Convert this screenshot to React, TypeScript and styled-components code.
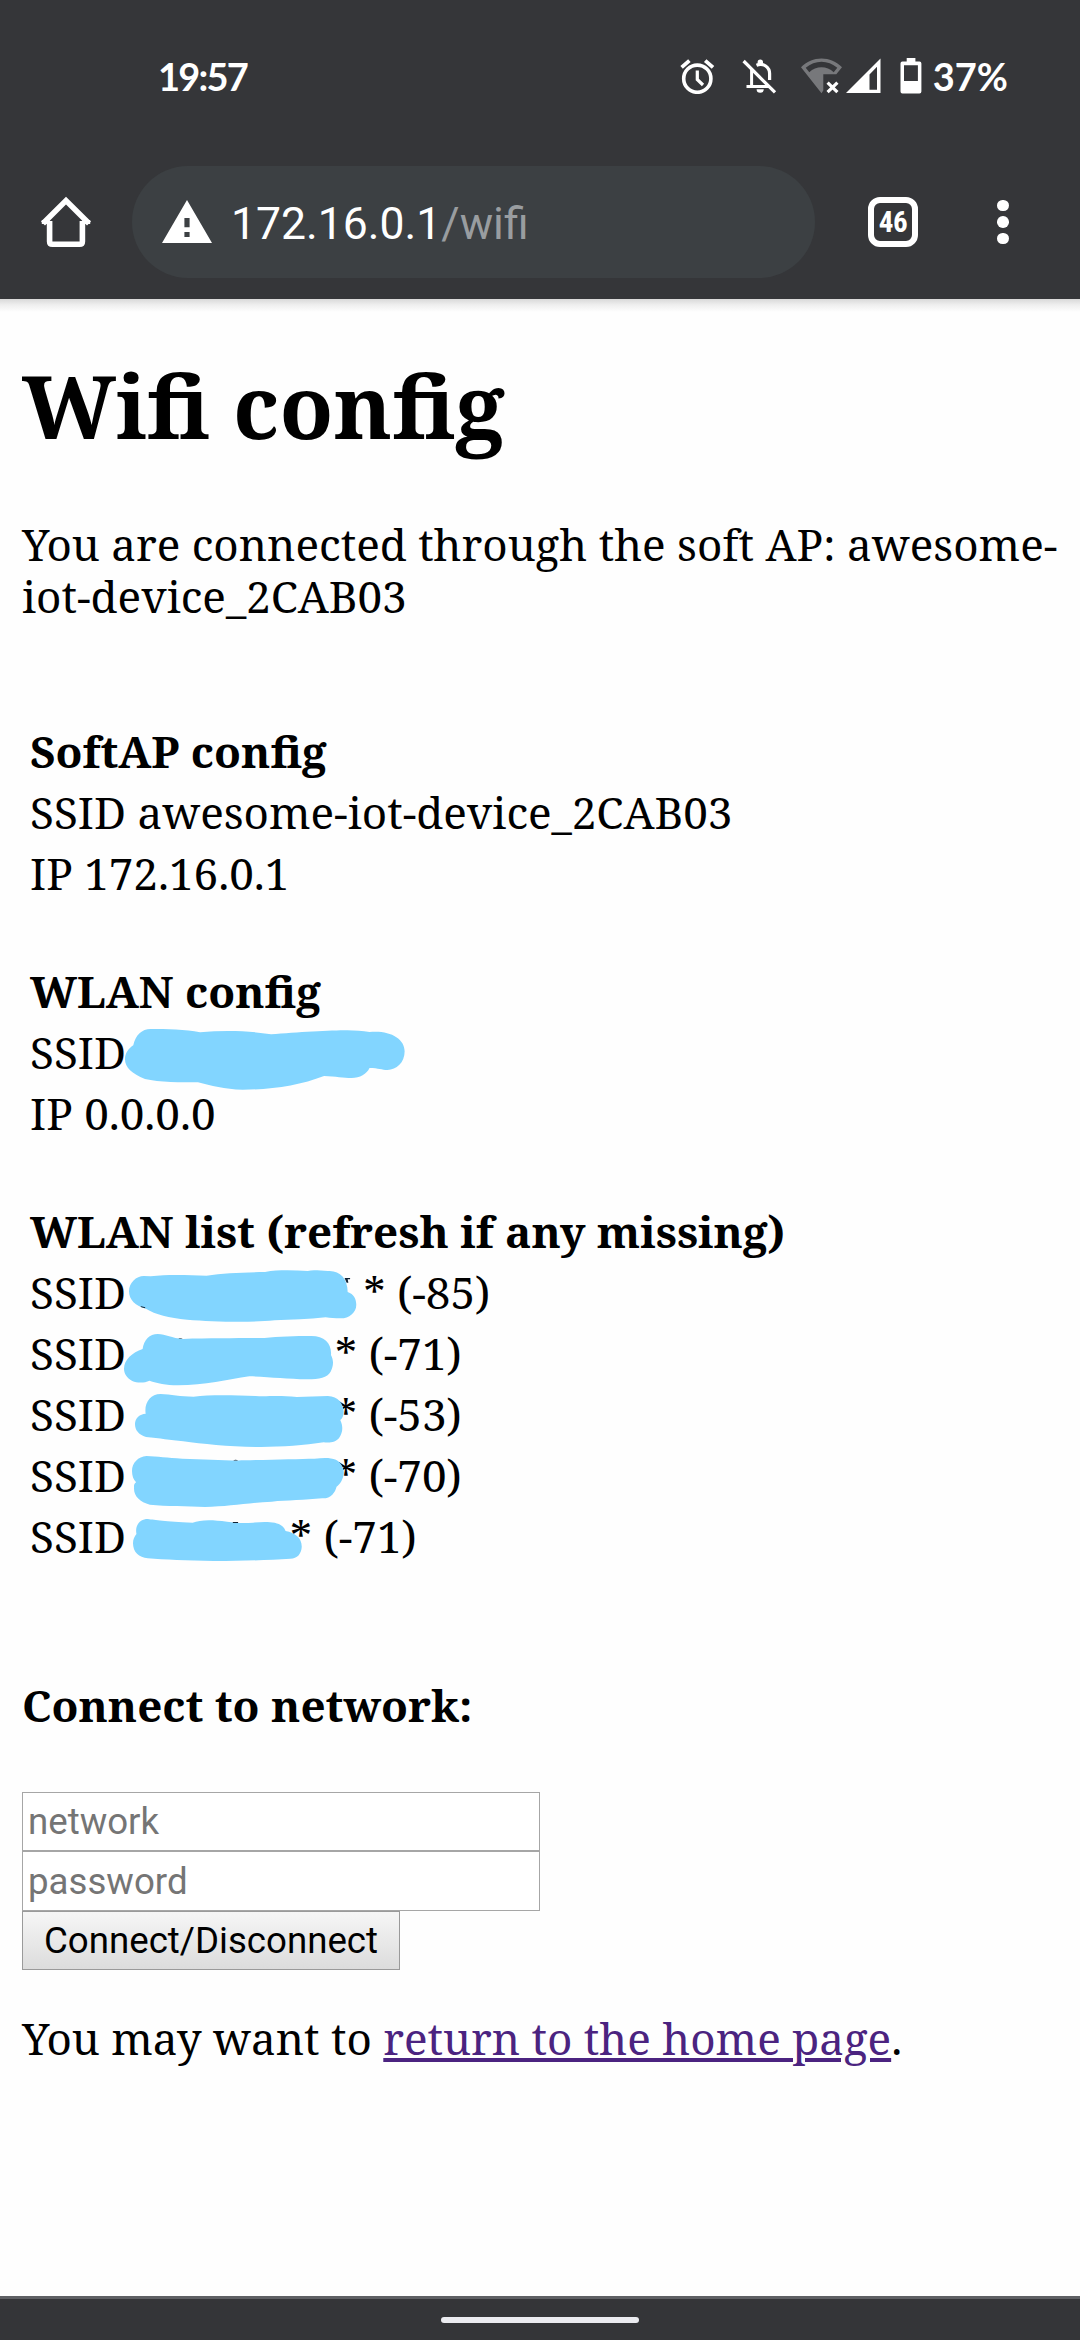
import React from "react";
import styled, { createGlobalStyle } from "styled-components";

const GlobalStyle = createGlobalStyle`
  html, body { margin: 0; background: #fefefe; }
  * { box-sizing: border-box; }
`;

const Screen = styled.div`
  display: flex;
  flex-direction: column;
  width: 1080px;
  height: 2340px;
  overflow: hidden;
  background: #fefefe;
  font-family: "Noto Serif", "DejaVu Serif", serif;
  color: #000;
`;

const BrowserTop = styled.header`
  flex: none;
  height: 299px;
  background: #353639;
  color: #fff;
`;

const StatusBar = styled.div`
  display: flex;
  justify-content: space-between;
  align-items: center;
  height: 151px;
  padding: 0 72px 0 158px;
`;

const StatusText = styled.span<{ $tracking: number }>`
  font: 700 38px/48px Lato, "Open Sans", sans-serif;
  letter-spacing: ${(p) => p.$tracking}px;
`;

const StatusGroup = styled.div`
  display: flex;
  align-items: center;
`;

const StatusIcon = styled.svg<{ $gap: number }>`
  display: block;
  flex: none;
  margin-right: ${(p) => p.$gap}px;
`;

const Toolbar = styled.div`
  display: flex;
  align-items: center;
  height: 142px;
  padding: 0 71px 0 40px;
`;

const ToolIcon = styled.svg`
  display: block;
  flex: none;
`;

const AddressBar = styled.div`
  display: flex;
  align-items: center;
  width: 683px;
  height: 112px;
  margin-left: 40px;
  padding-left: 29px;
  border-radius: 56px;
  background: #3c4043;
`;

const Url = styled.span`
  margin-left: 18px;
  padding-top: 3px;
  font: 400 44.5px/52px Roboto, sans-serif;
  color: #fff;
`;

const UrlPath = styled.span`
  color: #999da0;
`;

const TabCount = styled.div`
  display: flex;
  align-items: center;
  justify-content: center;
  width: 50px;
  height: 50px;
  margin-left: 53px;
  border: 6px solid #fff;
  border-radius: 12px;
  font: 700 29px/30px "Roboto Condensed", Roboto, sans-serif;
  letter-spacing: -0.5px;
`;

const MenuDots = styled.div`
  display: flex;
  flex-direction: column;
  gap: 5px;
  margin-left: auto;

  i {
    width: 11.6px;
    height: 11.6px;
    border-radius: 50%;
    background: #fff;
  }
`;

const Page = styled.main`
  flex: 1;
  padding: 46px 22px 0;
  background: linear-gradient(#d9d9d9, #efefef 6px, #fefefe 13px);
`;

const Title = styled.h1`
  margin: 0;
  font-size: 88px;
  line-height: 120px;
  font-weight: 700;
`;

const Paragraph = styled.p<{ $top: number }>`
  margin: ${(p) => p.$top}px 0 0;
  font-size: 44px;
  line-height: 52px;
`;

const Subtitle = styled(Paragraph)`
  font-weight: 700;
`;

const Sections = styled.div`
  display: flex;
  flex-direction: column;
  gap: 57px;
  margin-top: 99px;
  padding-left: 8px;
`;

const Section = styled.section`
  font-size: 44px;
  line-height: 61px;
`;

const SectionTitle = styled.div`
  font-weight: 700;
`;

const Row = styled.div`
  display: flex;
  height: 61px;
  white-space: pre;
`;

const HiddenName = styled.span<{ $width: number }>`
  position: relative;
  flex: none;
  width: ${(p) => p.$width}px;
`;

const Scribble = styled.svg<{ $x: number; $y: number }>`
  position: absolute;
  left: ${(p) => p.$x}px;
  top: ${(p) => p.$y}px;
  overflow: visible;
  z-index: 1;
`;

const Form = styled.form`
  display: flex;
  flex-direction: column;
  align-items: flex-start;
  margin-top: 61px;
`;

const Field = styled.input<{ $height: number }>`
  width: 518px;
  height: ${(p) => p.$height}px;
  margin: 0;
  padding: 0 5px;
  border: 1px solid #a6a6a6;
  border-radius: 0;
  background: #fff;
  font: 400 36.67px/43px Roboto, sans-serif;

  &::placeholder {
    color: #757575;
    opacity: 1;
  }
`;

const SubmitButton = styled.button`
  width: 378px;
  height: 59px;
  margin: 0;
  padding: 0;
  border: 1px solid #9a9a9a;
  border-radius: 0;
  background: linear-gradient(#f6f6f6, #dcdcdc);
  font: 400 36.67px/43px Roboto, sans-serif;
  color: #000;
`;

const HomeLink = styled.a`
  color: #4b2380;
  text-decoration: underline;
  text-decoration-thickness: 4px;
  text-underline-offset: 3px;
`;

const NavigationBar = styled.footer`
  display: flex;
  flex: none;
  justify-content: center;
  height: 44px;
  padding-top: 18px;
  border-top: 3px solid #5f6064;
  background: #343538;
`;

const Handle = styled.div`
  width: 198px;
  height: 6px;
  border-radius: 3px;
  background: #ebebf0;
`;

type Blob = { x: number; y: number; w: number; h: number; path: string; ink?: string };

const UNIT_X = 540 / 1568;
const UNIT_Y = 1 / 3;

const blobs: Record<string, Blob> = {
  saved: {
    x: 362, y: 987, w: 812, h: 182,
    path: "M386 1036C392 1005 412 987 436 987C482 987 538 988 580 997C650 990 722 992 786 1003C860 997 960 991 1008 991C1030 991 1052 994 1072 996C1130 990 1174 1015 1174 1054C1174 1088 1150 1110 1124 1110C1108 1110 1098 1104 1072 1104C1064 1122 1044 1134 1020 1134C996 1134 974 1129 940 1128C870 1156 788 1169 704 1169C650 1169 612 1156 574 1147C528 1147 460 1147 420 1137C382 1122 362 1102 362 1078C362 1060 372 1046 386 1036Z",
  },
  n1: {
    x: 375, y: 240, w: 660, h: 156,
    path: "M375 304C375 278 396 258 418 258L438 259C492 252 552 256 600 257C650 249 704 247 770 246C810 239 852 241 894 243C914 238 934 244 958 243C988 244 1010 266 1010 306C1028 312 1035 328 1035 344C1035 368 1014 385 990 385C972 385 960 384 946 382C896 389 846 389 798 391C720 399 618 395 544 389C490 383 452 374 424 356C394 348 375 330 375 304Z",
    ink: "M1001 264H1017V268H1010L1012 278H1007ZM408 348L422 352V355L411 352Z",
  },
  n2: {
    x: 360, y: 431, w: 607, h: 154,
    path: "M414 476C418 449 434 431 458 431C482 431 498 444 532 446C612 443 704 444 768 443C808 438 858 437 904 437C944 437 964 462 961 494C970 512 968 528 960 544C950 562 928 567 892 567C832 566 782 560 724 558C660 568 596 585 516 585C482 584 456 579 434 571C418 579 398 578 384 572C368 562 360 550 360 535C360 508 384 487 414 476Z",
    ink: "M518 443.5C522 442.5 527 443 530 446Z",
  },
  n3: {
    x: 392, y: 612, w: 606, h: 159,
    path: "M423 671C418 640 436 612 466 612C496 613 524 620 562 620C610 614 680 616 742 618C780 620 806 615 862 621C892 621 922 618 952 618C982 619 998 642 998 666C998 676 994 686 988 690C998 712 994 728 986 742C976 758 956 759 940 757C884 766 820 771 758 771C670 771 590 762 532 754C494 750 464 745 424 741C402 734 392 720 392 702C392 684 406 672 423 671Z",
  },
  n4: {
    x: 384, y: 799, w: 616, h: 153,
    path: "M384 844C384 819 402 801 426 799C458 801 486 804 530 807C596 808 650 813 710 812C790 810 870 808 914 807C938 804 960 803 976 810C990 817 1000 834 999 852C996 870 988 884 978 891C974 908 962 927 936 926C888 931 832 932 790 936C720 940 664 951 596 952C544 949 484 950 436 945C406 938 388 918 390 894C389 886 391 882 396 878C388 870 384 858 384 844Z",
    ink: "M678 812.5C681 810 689 810 692 812.5Z",
  },
  n5: {
    x: 385, y: 987, w: 490, h: 126,
    path: "M395 1032C390 1005 406 987 428 987C450 990 476 995 558 998C580 989 612 988 658 995C684 999 704 1000 734 998C780 994 820 995 828 1023C856 1028 875 1044 875 1070C874 1091 862 1106 842 1106C780 1110 708 1113 620 1113C540 1112 476 1109 428 1105C402 1103 385 1086 385 1060C385 1048 389 1040 395 1032Z",
    ink: "M674 996L690 996V999H676Z",
  },
};

/* Left edge of the hidden name in the drawings' own units. */
const NAME_LEFT = 126 / UNIT_X;

function Redaction({ blob, rowTop, width }: { blob: Blob; rowTop: number; width: number }) {
  return (
    <HiddenName $width={width}>
      <Scribble
        $x={(blob.x - NAME_LEFT) * UNIT_X}
        $y={(blob.y - rowTop) * UNIT_Y}
        width={blob.w * UNIT_X}
        height={blob.h * UNIT_Y}
        viewBox={`${blob.x} ${blob.y} ${blob.w} ${blob.h}`}
        preserveAspectRatio="none"
      >
        <path d={blob.path} fill="#82d5ff" />
        {blob.ink && <path d={blob.ink} fill="#123" />}
      </Scribble>
    </HiddenName>
  );
}

const networks = [
  { blob: blobs.n1, signal: -85, width: 237.5 },
  { blob: blobs.n2, signal: -71, width: 209 },
  { blob: blobs.n3, signal: -53, width: 209 },
  { blob: blobs.n4, signal: -70, width: 209 },
  { blob: blobs.n5, signal: -71, width: 164 },
];

const AlarmIcon = () => (
  <StatusIcon $gap={27} width="35" height="36" viewBox="0 0 35 36" fill="none" stroke="#fff">
    <circle cx="17.3" cy="20.7" r="13.6" strokeWidth="3.6" />
    <path d="M17.3 12.5V21.5L23 27" strokeWidth="3.2" />
    <path d="M1.6 9.4L9.4 2.6M25.2 2.6L33 9.4" strokeWidth="3.8" />
  </StatusIcon>
);

const MutedBellIcon = () => (
  <StatusIcon $gap={24} width="35" height="36" viewBox="0 0 35 36" fill="none" stroke="#fff">
    <path d="M9.6 11.5V27.5M4.5 28.4H27" strokeWidth="3" />
    <path d="M14.5 7.3C21.5 4.3 27.6 9.5 27.6 15.5V22" strokeWidth="3.2" />
    <path d="M15.6 6V4.2A2.7 2.7 0 0 1 21 4.2V6.5ZM14.6 31.2H21.8A3.6 3.6 0 0 1 14.6 31.2Z" fill="#fff" stroke="none" />
    <path d="M1.6 3L33 34.4" strokeWidth="3.2" />
  </StatusIcon>
);

const WifiOffIcon = () => (
  <StatusIcon $gap={4} width="41" height="36" viewBox="0 0 41 36">
    <path
      fill="#77787b"
      fillRule="evenodd"
      d="M0 9.2C11-2.4 30-2.4 41 9.2L35.3 16.3H22.3V32.6L20.5 35.3ZM4.7 9.8L8.3 14.2C15 7.6 26 7.6 32.7 14.2L36.3 9.8C27 1.6 14 1.6 4.7 9.8Z"
    />
    <path d="M26.6 24.6L36.4 34.2M36.4 24.6L26.6 34.2" stroke="#fff" strokeWidth="3.2" />
  </StatusIcon>
);

const SignalIcon = () => (
  <StatusIcon $gap={19} width="35" height="36" viewBox="0 0 35 36">
    <path d="M0 35L34.5 .5V35ZM23.5 16.5V31.8H31V8.8Z" fill="#fff" fillRule="evenodd" />
  </StatusIcon>
);

const BatteryIcon = () => (
  <StatusIcon $gap={11} width="22" height="36" viewBox="0 0 22 36">
    <path
      d="M6.7 0H15.4V3.6H19.5Q21.4 3.6 21.4 5.6V33.6Q21.4 35.6 19.5 35.6H2.4Q.5 35.6 .5 33.6V5.6Q.5 3.6 2.4 3.6H6.7ZM4 7.2V23H17.9V7.2Z"
      fill="#fff"
      fillRule="evenodd"
    />
  </StatusIcon>
);

export default function App() {
  return (
    <Screen>
      <GlobalStyle />
      <BrowserTop>
        <StatusBar>
          <StatusText $tracking={-1.8}>19:57</StatusText>
          <StatusGroup>
            <AlarmIcon />
            <MutedBellIcon />
            <WifiOffIcon />
            <SignalIcon />
            <BatteryIcon />
            <StatusText $tracking={0}>37%</StatusText>
          </StatusGroup>
        </StatusBar>
        <Toolbar>
          <ToolIcon width="52" height="52" viewBox="0 0 52 52" fill="none" stroke="#fff" strokeWidth="5.6">
            <path d="M9.6 25V45.4Q9.6 48.2 12.4 48.2H39.6Q42.4 48.2 42.4 45.4V25" />
            <path d="M3 27.6L26 4.6L49 27.6" />
            <path d="M1.8 26H9.6M42.4 26H50.2" strokeWidth="4" />
          </ToolIcon>
          <AddressBar>
            <ToolIcon width="52" height="46" viewBox="0 0 52 46">
              <path d="M26 1L51 44H1ZM23.4 19V28.2H28.6V19ZM23.4 33V38H28.6V33Z" fill="#fff" fillRule="evenodd" />
            </ToolIcon>
            <Url>
              172.16.0.1<UrlPath>/wifi</UrlPath>
            </Url>
          </AddressBar>
          <TabCount>46</TabCount>
          <MenuDots>
            <i />
            <i />
            <i />
          </MenuDots>
        </Toolbar>
      </BrowserTop>

      <Page>
        <Title>Wifi config</Title>
        <Paragraph $top={53}>
          You are connected through the soft AP: awesome-
          <br />
          iot-device_2CAB03
        </Paragraph>
        <Sections>
          <Section>
            <SectionTitle>SoftAP config</SectionTitle>
            <Row>SSID awesome-iot-device_2CAB03</Row>
            <Row>IP 172.16.0.1</Row>
          </Section>
          <Section>
            <SectionTitle>WLAN config</SectionTitle>
            <Row>
              SSID
              <Redaction blob={blobs.saved} rowTop={966} width={280} />
            </Row>
            <Row>IP 0.0.0.0</Row>
          </Section>
          <Section>
            <SectionTitle>WLAN list (refresh if any missing)</SectionTitle>
            {networks.map((n, i) => (
              <Row key={i}>
                SSID
                <Redaction blob={n.blob} rowTop={216 + i * 183} width={n.width} />
                {`* (${n.signal})`}
              </Row>
            ))}
          </Section>
        </Sections>
        <Subtitle $top={112}>Connect to network:</Subtitle>
        <Form onSubmit={(e) => e.preventDefault()}>
          <Field $height={59} placeholder="network" />
          <Field $height={60} placeholder="password" />
          <SubmitButton type="submit">Connect/Disconnect</SubmitButton>
        </Form>
        <Paragraph $top={42}>
          You may want to <HomeLink href="#">return to the home page</HomeLink>.
        </Paragraph>
      </Page>

      <NavigationBar>
        <Handle />
      </NavigationBar>
    </Screen>
  );
}
